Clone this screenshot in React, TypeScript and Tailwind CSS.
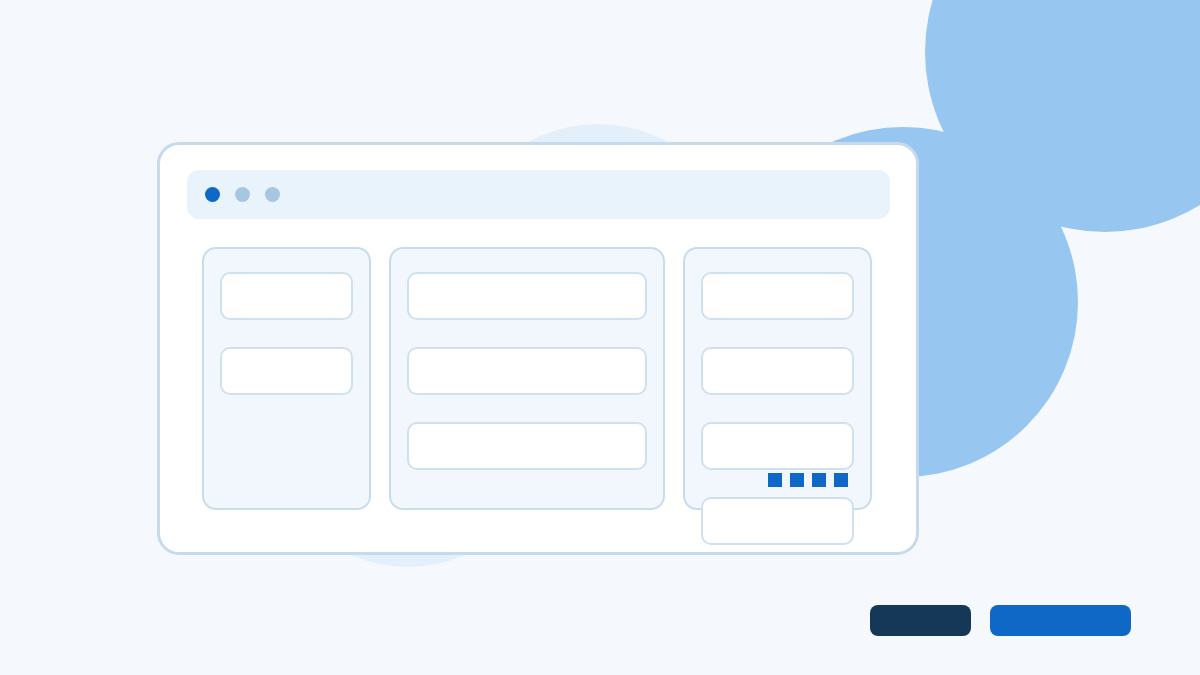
import React from "react";

function Card() {
  return <div className="h-[48px] shrink-0 rounded-[10px] border-2 border-[#cfe1ef] bg-white" />;
}

export default function App() {
  return (
    <div className="relative h-[675px] w-[1200px] overflow-hidden bg-[#f5f9fd] font-['Liberation_Sans',sans-serif]">
      {/* decorative circles */}
      <div className="absolute left-[453px] top-[124px] h-[290px] w-[290px] rounded-full bg-[#e3effb]" />
      <div className="absolute left-[267px] top-[285px] h-[282px] w-[282px] rounded-full bg-[#e3effb]" />
      <div className="absolute left-[925px] top-[-128px] h-[360px] w-[360px] rounded-full bg-[#97c7f0]" />
      <div className="absolute left-[728px] top-[127px] h-[350px] w-[350px] rounded-full bg-[#97c7f0]" />

      <div className="relative flex flex-col pl-[157px] pt-[142px]">
        {/* window */}
        <div className="flex h-[413px] w-[762px] flex-col rounded-[22px] border-[3px] border-[#c6daec] bg-white pl-[27px] pr-[26px] pt-[25px]">
          <div className="flex h-[49px] items-center gap-[15px] rounded-[12px] bg-[#e8f3fc] pl-[18px]">
            <div className="h-[15px] w-[15px] rounded-full bg-[#1068c6]" />
            <div className="h-[15px] w-[15px] rounded-full bg-[#a9c6e0]" />
            <div className="h-[15px] w-[15px] rounded-full bg-[#a9c6e0]" />
          </div>
          <div className="mt-[28px] flex gap-[18px] pl-[15px]">
            <div className="flex h-[263px] w-[169px] flex-col gap-[27px] rounded-[14px] border-2 border-[#c8dced] bg-[#f1f7fc] pl-[16px] pr-[16px] pt-[23px]">
              <Card />
              <Card />
            </div>
            <div className="flex h-[263px] w-[276px] flex-col gap-[27px] rounded-[14px] border-2 border-[#c8dced] bg-[#f1f7fc] pl-[16px] pr-[16px] pt-[23px]">
              <Card />
              <Card />
              <Card />
            </div>
            <div className="relative flex h-[263px] w-[189px] flex-col gap-[27px] rounded-[14px] border-2 border-[#c8dced] bg-[#f1f7fc] pl-[16px] pr-[16px] pt-[23px]">
              <Card />
              <Card />
              <Card />
              <Card />
              <div className="absolute left-[83px] top-[224px] flex gap-[8px]">
                <div className="h-[14px] w-[14px] bg-[#1068c6]" />
                <div className="h-[14px] w-[14px] bg-[#1068c6]" />
                <div className="h-[14px] w-[14px] bg-[#1068c6]" />
                <div className="h-[14px] w-[14px] bg-[#1068c6]" />
              </div>
            </div>
          </div>
        </div>
        {/* buttons */}
        <div className="mt-[50px] flex justify-end gap-[19px] pr-[69px]">
          <div className="h-[31px] w-[101px] rounded-[8px] bg-[#163858]" />
          <div className="h-[31px] w-[141px] rounded-[8px] bg-[#1068c6]" />
        </div>
      </div>
    </div>
  );
}
